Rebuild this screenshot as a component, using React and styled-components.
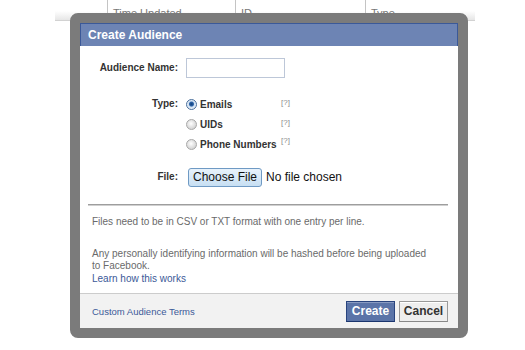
import React from "react";
import styled, { createGlobalStyle } from "styled-components";

const Global = createGlobalStyle`
  html, body { margin: 0; padding: 0; background: #fff; }
  body { font-family: "Liberation Sans", Arial, sans-serif; }
  #root { width: 525px; height: 350px; }
`;

const Page = styled.div`
  position: relative;
  width: 525px;
  height: 350px;
  overflow: hidden;
  background: #fff;
`;

const TableHead = styled.div`
  margin: 0 50px 0 55px;
  height: 20px;
  display: grid;
  grid-template-columns: 52px 128px 130px 1fr;
  background: linear-gradient(#fff 55%, #e6e6e6);
  border-bottom: 1px solid #d2d2d2;
`;

const HeadCell = styled.div`
  padding: 7px 0 0 5px;
  font-size: 11px;
  line-height: 12px;
  color: #777;
  border-left: ${(p) => (p.$first ? "none" : "1px solid #c4c4c4")};
  white-space: nowrap;
`;

const Dialog = styled.div`
  position: absolute;
  left: 70px;
  top: 13px;
  width: 398px;
  height: 325px;
  box-sizing: border-box;
  border: 10px solid #7b7b7b;
  border-radius: 8px;
  display: flex;
  flex-direction: column;
  background: #fff;
`;

const Header = styled.div`
  height: 23px;
  box-sizing: border-box;
  background: #6d84b4;
  border: 1px solid #3b5998;
  border-bottom: none;
  color: #fff;
  font-weight: bold;
  font-size: 12px;
  line-height: 22px;
  padding-left: 7px;
`;

const Body = styled.div`
  flex: 1;
  display: flex;
  flex-direction: column;
`;

const FieldRow = styled.div`
  display: grid;
  grid-template-columns: 98px 1fr;
  column-gap: 8px;
  align-items: start;
  margin-top: ${(p) => p.$mt}px;
`;

const Label = styled.div`
  text-align: right;
  font-weight: bold;
  font-size: 10px;
  color: #333;
  line-height: ${(p) => p.$lh}px;
`;

const TextInput = styled.div`
  width: 99px;
  height: 20px;
  box-sizing: border-box;
  border: 1px solid #bdc7d8;
  background: #fff;
`;

const RadioList = styled.div`
  display: flex;
  flex-direction: column;
  gap: 2px;
`;

const RadioRow = styled.div`
  display: flex;
  align-items: center;
  height: 18px;
`;

const RadioDot = styled.span`
  width: 11px;
  height: 11px;
  box-sizing: border-box;
  border-radius: 50%;
  border: 1px solid ${(p) => (p.$on ? "#4a6f9c" : "#a8a8a8")};
  background: ${(p) =>
    p.$on
      ? "radial-gradient(circle at 50% 45%, #0f3e7a 0, #2f64a8 2px, #cfe0f2 3px, #eef3f8 5px)"
      : "radial-gradient(circle at 45% 40%, #ffffff 0, #e6e6e6 3px, #cfcfcf 6px)"};
  margin-right: 3px;
  flex: none;
`;

const RadioText = styled.span`
  min-width: 79px;
  font-weight: bold;
  font-size: 10px;
  color: #333;
`;

const Help = styled.span`
  font-size: 8px;
  color: #8a8a8a;
  margin-left: 2px;
  position: relative;
  top: ${(p) => (p.$sup ? -4 : -2)}px;
`;

const FileControl = styled.div`
  display: flex;
  align-items: center;
  gap: 4px;
  margin-left: 2px;
  height: 20px;
`;

const FileButton = styled.span`
  height: 19px;
  box-sizing: border-box;
  width: 74px;
  border: 1px solid #6f9ac4;
  border-radius: 3px;
  background: linear-gradient(#e8f2fb, #c7dff3);
  font-size: 12px;
  line-height: 17px;
  text-align: center;
  color: #111;
`;

const FileText = styled.span`
  font-size: 12px;
  color: #111;
`;

const Divider = styled.div`
  margin: 17px 10px 0 8px;
  height: 0;
  border-top: 1px solid #9e9e9e;
  border-bottom: 1px solid #d0d0d0;
`;

const Note = styled.p`
  margin: ${(p) => p.$mt}px 0 0 12px;
  max-width: 340px;
  font-size: 10px;
  line-height: 12.5px;
  color: #6a6a6a;
`;

const Link = styled.a`
  color: #3b5998;
  text-decoration: none;
  font-size: ${(p) => p.$fs || 10}px;
`;

const Footer = styled.div`
  height: 35px;
  box-sizing: border-box;
  border-top: 1px solid #cccccc;
  background: #f2f2f2;
  display: flex;
  align-items: center;
  justify-content: space-between;
  padding: 0 10px 0 12px;
`;

const Buttons = styled.div`
  display: flex;
  gap: 4px;
`;

const Button = styled.span`
  width: 49px;
  height: 21px;
  box-sizing: border-box;
  font-weight: bold;
  font-size: 12px;
  line-height: 19px;
  text-align: center;
  color: ${(p) => (p.$primary ? "#fff" : "#333")};
  background: ${(p) => (p.$primary ? "#5b74a8" : "#eeeeee")};
  border: 1px solid ${(p) => (p.$primary ? "#29447e" : "#999999")};
  border-bottom-color: ${(p) => (p.$primary ? "#1a356e" : "#888")};
  box-shadow: ${(p) =>
    p.$primary ? "inset 0 1px 0 #8a9cc2" : "inset 0 1px 0 #fff"};
`;

export default function App() {
  return (
    <Page>
      <Global />
      <TableHead>
        <HeadCell $first />
        <HeadCell>Time Updated</HeadCell>
        <HeadCell>ID</HeadCell>
        <HeadCell>Type</HeadCell>
      </TableHead>
      <Dialog>
        <Header>Create Audience</Header>
        <Body>
          <FieldRow $mt={12}>
            <Label $lh={20}>Audience Name:</Label>
            <TextInput />
          </FieldRow>
          <FieldRow $mt={17}>
            <Label $lh={18}>Type:</Label>
            <RadioList>
              <RadioRow>
                <RadioDot $on />
                <RadioText>Emails</RadioText>
                <Help>[?]</Help>
              </RadioRow>
              <RadioRow>
                <RadioDot />
                <RadioText>UIDs</RadioText>
                <Help>[?]</Help>
              </RadioRow>
              <RadioRow>
                <RadioDot />
                <RadioText>Phone Numbers</RadioText>
                <Help $sup>[?]</Help>
              </RadioRow>
            </RadioList>
          </FieldRow>
          <FieldRow $mt={14}>
            <Label $lh={20}>File:</Label>
            <FileControl>
              <FileButton>Choose File</FileButton>
              <FileText>No file chosen</FileText>
            </FileControl>
          </FieldRow>
          <Divider />
          <Note $mt={10}>
            Files need to be in CSV or TXT format with one entry per line.
          </Note>
          <Note $mt={19}>
            Any personally identifying information will be hashed before being
            uploaded to Facebook.
            <br />
            <Link href="#">Learn how this works</Link>
          </Note>
        </Body>
        <Footer>
          <Link href="#" $fs={9.5}>
            Custom Audience Terms
          </Link>
          <Buttons>
            <Button $primary>Create</Button>
            <Button>Cancel</Button>
          </Buttons>
        </Footer>
      </Dialog>
    </Page>
  );
}
